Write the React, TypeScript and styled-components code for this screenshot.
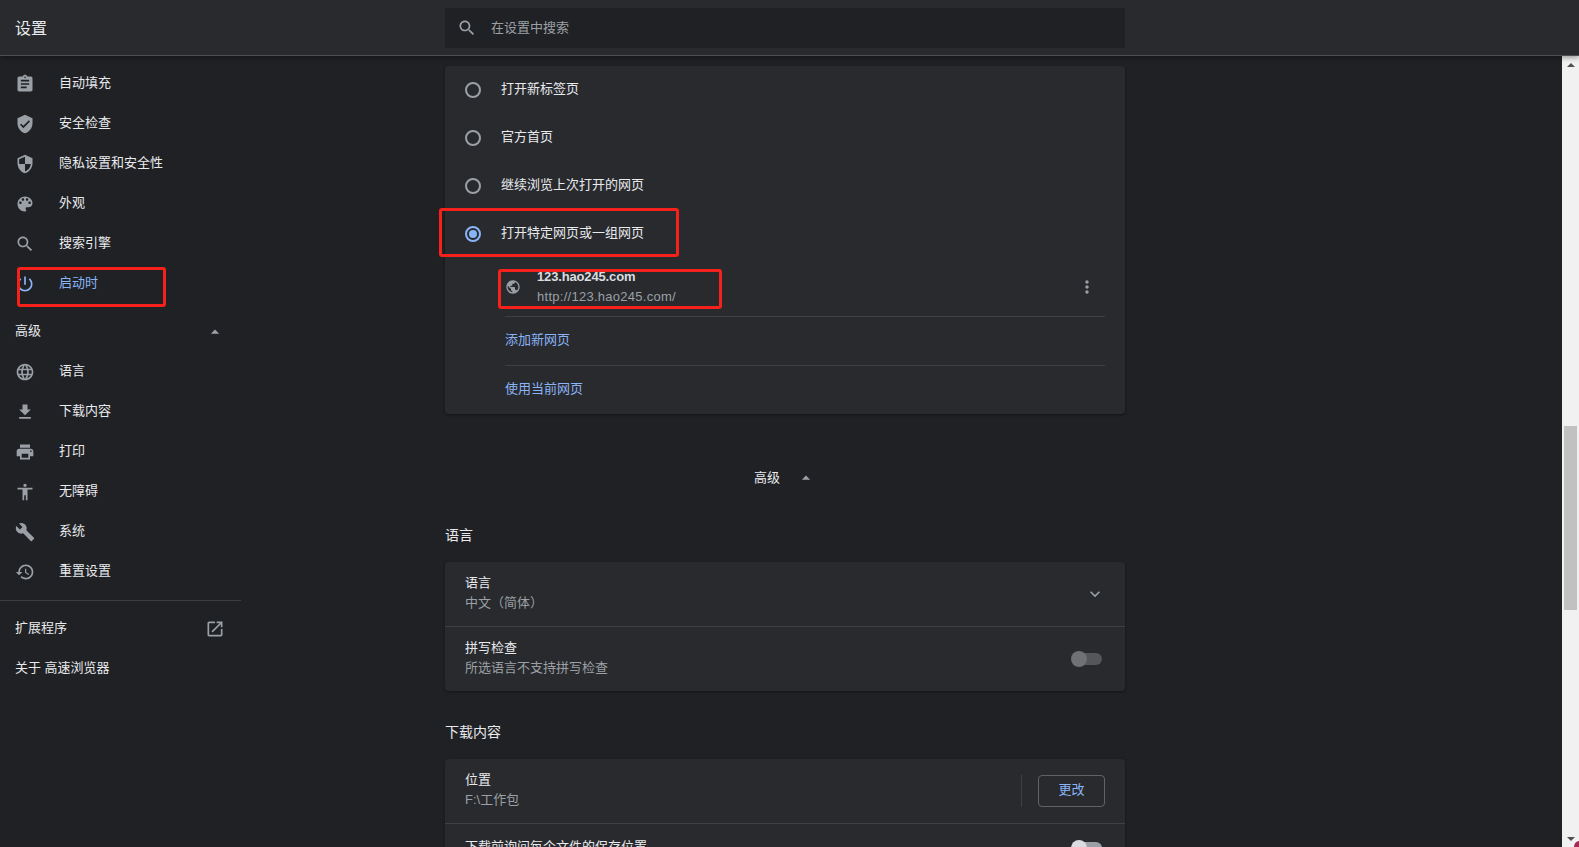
import React from "react";
import styled, { createGlobalStyle } from "styled-components";

const GlobalStyle = createGlobalStyle`
  html, body {
    margin: 0;
    height: 100%;
    overflow: hidden;
    background: #202124;
  }
  body {
    font-family: "Liberation Sans", "Noto Sans CJK SC", sans-serif;
    font-size: 13px;
    line-height: 20px;
    color: #e8eaed;
  }
`;

const paths = {
  assignment:
    "M19 3h-4.18C14.4 1.84 13.3 1 12 1c-1.3 0-2.4.84-2.82 2H5c-1.1 0-2 .9-2 2v14c0 1.1.9 2 2 2h14c1.1 0 2-.9 2-2V5c0-1.1-.9-2-2-2zm-7 0c.55 0 1 .45 1 1s-.45 1-1 1-1-.45-1-1 .45-1 1-1zm2 14H7v-2h7v2zm3-4H7v-2h10v2zm0-4H7V7h10v2z",
  verified:
    "M12 1L3 5v6c0 5.55 3.84 10.74 9 12 5.16-1.26 9-6.45 9-12V5l-9-4zm-2 16l-4-4 1.41-1.41L10 14.17l6.59-6.59L18 9l-8 8z",
  security:
    "M12 1L3 5v6c0 5.55 3.84 10.74 9 12 5.16-1.26 9-6.45 9-12V5l-9-4zm0 10.99h7c-.53 4.12-3.28 7.79-7 8.94V12H5V6.3l7-3.11v8.8z",
  palette:
    "M12 3c-4.97 0-9 4.03-9 9s4.03 9 9 9c.83 0 1.5-.67 1.5-1.5 0-.39-.15-.74-.39-1.01-.23-.26-.38-.61-.38-.99 0-.83.67-1.5 1.5-1.5H16c2.76 0 5-2.24 5-5 0-4.42-4.03-8-9-8zm-5.5 9c-.83 0-1.5-.67-1.5-1.5S5.67 9 6.5 9 8 9.67 8 10.5 7.33 12 6.5 12zm3-4C8.67 8 8 7.33 8 6.5S8.67 5 9.5 5s1.5.67 1.5 1.5S10.33 8 9.5 8zm5 0c-.83 0-1.5-.67-1.5-1.5S13.67 5 14.5 5s1.5.67 1.5 1.5S15.33 8 14.5 8zm3 4c-.83 0-1.5-.67-1.5-1.5S16.67 9 17.5 9s1.5.67 1.5 1.5-.67 1.5-1.5 1.5z",
  search:
    "M15.5 14h-.79l-.28-.27C15.41 12.59 16 11.11 16 9.5 16 5.91 13.09 3 9.5 3S3 5.91 3 9.5 5.91 16 9.5 16c1.61 0 3.09-.59 4.23-1.57l.27.28v.79l5 4.99L20.49 19l-4.99-5zm-6 0C7.01 14 5 11.99 5 9.5S7.01 5 9.5 5 14 7.01 14 9.5 11.99 14 9.5 14z",
  power:
    "M13 3h-2v10h2V3zm4.83 2.17l-1.42 1.42C17.99 7.86 19 9.81 19 12c0 3.87-3.13 7-7 7s-7-3.13-7-7c0-2.19 1.01-4.14 2.58-5.42L6.17 5.17C4.23 6.82 3 9.26 3 12c0 4.97 4.03 9 9 9s9-4.03 9-9c0-2.74-1.23-5.18-3.17-6.83z",
  language:
    "M11.99 2C6.47 2 2 6.48 2 12s4.47 10 9.99 10C17.52 22 22 17.52 22 12S17.52 2 11.99 2zm6.93 6h-2.95c-.32-1.25-.78-2.45-1.38-3.56 1.84.63 3.37 1.91 4.33 3.56zM12 4.04c.83 1.2 1.48 2.53 1.91 3.96h-3.82c.43-1.43 1.08-2.76 1.91-3.96zM4.26 14C4.1 13.36 4 12.69 4 12s.1-1.36.26-2h3.38c-.08.66-.14 1.32-.14 2 0 .68.06 1.34.14 2H4.26zm.82 2h2.95c.32 1.25.78 2.45 1.38 3.56-1.84-.63-3.37-1.9-4.33-3.56zm2.95-8H5.08c.96-1.66 2.49-2.93 4.33-3.56C8.81 5.55 8.35 6.75 8.03 8zM12 19.96c-.83-1.2-1.48-2.53-1.91-3.96h3.82c-.43 1.43-1.08 2.76-1.91 3.96zM14.34 14H9.66c-.09-.66-.16-1.32-.16-2 0-.68.07-1.35.16-2h4.68c.09.65.16 1.32.16 2 0 .68-.07 1.34-.16 2zm.25 5.56c.6-1.11 1.06-2.31 1.38-3.56h2.95c-.96 1.65-2.49 2.93-4.33 3.56zM16.36 14c.08-.66.14-1.32.14-2 0-.68-.06-1.34-.14-2h3.38c.16.64.26 1.31.26 2s-.1 1.36-.26 2h-3.38z",
  download: "M19 9h-4V3H9v6H5l7 7 7-7zM5 18v2h14v-2H5z",
  print:
    "M19 8H5c-1.66 0-3 1.34-3 3v6h4v4h12v-4h4v-6c0-1.66-1.34-3-3-3zm-3 11H8v-5h8v5zm3-7c-.55 0-1-.45-1-1s.45-1 1-1 1 .45 1 1-.45 1-1 1zm-1-9H6v4h12V3z",
  accessibility:
    "M12 2c1.1 0 2 .9 2 2s-.9 2-2 2-2-.9-2-2 .9-2 2-2zm9 7h-6v13h-2v-6h-2v6H9V9H3V7h18v2z",
  build:
    "M22.7 19l-9.1-9.1c.9-2.3.4-5-1.5-6.9-2-2-5-2.4-7.4-1.3L9 6 6 9 1.6 4.7C.4 7.1.9 10.1 2.9 12.1c1.9 1.9 4.6 2.4 6.9 1.5l9.1 9.1c.4.4 1 .4 1.4 0l2.3-2.3c.5-.4.5-1.1.1-1.4z",
  restore:
    "M13 3c-4.97 0-9 4.03-9 9H1l3.89 3.89.07.14L9 12H6c0-3.87 3.13-7 7-7s7 3.13 7 7-3.13 7-7 7c-1.93 0-3.68-.79-4.94-2.06l-1.42 1.42C8.27 19.99 10.51 21 13 21c4.97 0 9-4.03 9-9s-4.03-9-9-9zm-1 5v5l4.28 2.54.72-1.21-3.5-2.08V8H12z",
  openNew:
    "M19 19H5V5h7V3H5c-1.11 0-2 .9-2 2v14c0 1.1.89 2 2 2h14c1.1 0 2-.9 2-2v-7h-2v7zM14 3v2h3.59l-9.83 9.83 1.41 1.41L19 6.41V10h2V3h-7z",
  globe:
    "M12 2C6.48 2 2 6.48 2 12s4.48 10 10 10 10-4.48 10-10S17.52 2 12 2zm-1 17.93c-3.95-.49-7-3.85-7-7.93 0-.62.08-1.21.21-1.79L9 15v1c0 1.1.9 2 2 2v1.93zm6.9-2.54c-.26-.81-1-1.39-1.9-1.39h-1v-3c0-.55-.45-1-1-1H8v-2h2c.55 0 1-.45 1-1V7h2c1.1 0 2-.9 2-2v-.41c2.93 1.19 5 4.06 5 7.41 0 2.08-.8 3.97-2.1 5.39z",
  more:
    "M12 8c1.1 0 2-.9 2-2s-.9-2-2-2-2 .9-2 2 .9 2 2 2zm0 2c-1.1 0-2 .9-2 2s.9 2 2 2 2-.9 2-2-.9-2-2-2zm0 6c-1.1 0-2 .9-2 2s.9 2 2 2 2-.9 2-2-.9-2-2-2z",
  dropUp: "M7 14l5-5 5 5z",
  expand: "M16.59 8.59L12 13.17 7.41 8.59 6 10l6 6 6-6z",
};

const Svg = styled.svg<{ $size?: number; $active?: boolean }>`
  width: ${(p) => p.$size ?? 20}px;
  height: ${(p) => p.$size ?? 20}px;
  flex: none;
  fill: ${(p) => (p.$active ? "#8ab4f8" : "#9aa0a6")};
`;

const Icon = ({
  name,
  size,
  active,
}: {
  name: keyof typeof paths;
  size?: number;
  active?: boolean;
}) => (
  <Svg viewBox="0 0 24 24" $size={size} $active={active}>
    <path d={paths[name]} />
  </Svg>
);

const Page = styled.div`
  position: relative;
  display: flex;
  flex-direction: column;
  height: 100vh;
  overflow: hidden;
`;

const Header = styled.header`
  position: relative;
  z-index: 2;
  display: flex;
  align-items: center;
  flex: none;
  height: 55px;
  background: #292a2d;
  border-bottom: 1px solid #4c4d4f;
  box-shadow: 0 2px 5px rgba(0, 0, 0, 0.35);
`;

const Title = styled.h1`
  width: 430px;
  margin: 0;
  padding: 2px 0 0 15px;
  font-size: 16px;
  font-weight: 400;
`;

const SearchBox = styled.div`
  display: flex;
  align-items: center;
  gap: 14px;
  width: 680px;
  height: 40px;
  padding-left: 12px;
  box-sizing: border-box;
  background: #202124;
  border-radius: 2px;
  color: #9aa0a6;
`;

const Body = styled.div`
  display: flex;
  flex: 1;
  min-height: 0;
`;

const Sidebar = styled.nav`
  flex: none;
  width: 241px;
  padding-top: 8px;
`;

const NavRow = styled.div<{ $active?: boolean }>`
  display: flex;
  align-items: center;
  gap: 24px;
  height: 40px;
  padding-left: 15px;
  color: ${(p) => (p.$active ? "#8ab4f8" : "#e8eaed")};
`;

const NavPlain = styled.div<{ $top?: number }>`
  display: flex;
  align-items: center;
  justify-content: space-between;
  height: 40px;
  margin-top: ${(p) => p.$top ?? 0}px;
  padding: 0 16px 0 15px;
`;

// raises a label a little: the fallback CJK glyphs sit lower than the originals
const Label = styled.span`
  margin-bottom: 2px;
`;

const NavDivider = styled.div`
  height: 1px;
  margin: 8px 0;
  background: #3c3d40;
`;

const Main = styled.main`
  flex: 1;
  min-width: 0;
  padding: 10px 0 0 204px;
  overflow: hidden;
`;

const Column = styled.div`
  width: 680px;
`;

const Card = styled.section`
  background: #292a2d;
  border-radius: 4px;
  box-shadow: 0 1px 3px rgba(0, 0, 0, 0.4);
`;

const RadioRow = styled.div`
  display: flex;
  align-items: center;
  gap: 20px;
  height: 48px;
  padding-left: 20px;
`;

const Radio = styled.span<{ $checked?: boolean }>`
  display: flex;
  align-items: center;
  justify-content: center;
  flex: none;
  width: 16px;
  height: 16px;
  box-sizing: border-box;
  border: 2px solid ${(p) => (p.$checked ? "#8ab4f8" : "#9aa0a6")};
  border-radius: 50%;

  &::after {
    content: "";
    display: ${(p) => (p.$checked ? "block" : "none")};
    width: 8px;
    height: 8px;
    border-radius: 50%;
    background: #8ab4f8;
  }
`;

const UrlRow = styled.div`
  display: flex;
  align-items: center;
  gap: 16px;
  height: 58px;
  margin: 0 20px 0 60px;
  padding-right: 8px;
`;

const UrlText = styled.div`
  flex: 1;
`;

const UrlName = styled.div`
  font-weight: 700;
  letter-spacing: -0.15px;
  color: #dadce0;
`;

const UrlAddress = styled.div`
  letter-spacing: 0.27px;
  color: #9aa0a6;
`;

const LinkRow = styled.div`
  display: flex;
  align-items: center;
  height: 48px;
  margin: 0 20px 0 60px;
  border-top: 1px solid #3f4043;
  color: #8ab4f8;
`;

const AdvancedToggle = styled.div`
  display: flex;
  align-items: center;
  justify-content: center;
  gap: 16px;
  height: 48px;
  margin-top: 40px;
`;

const SectionHeading = styled.h2<{ $top: number }>`
  margin: ${(p) => p.$top}px 0 17px;
  font-size: 14px;
  font-weight: 400;
`;

const SettingRow = styled.div<{ $single?: boolean; $divided?: boolean }>`
  display: flex;
  align-items: center;
  justify-content: space-between;
  height: ${(p) => (p.$single ? 48 : 64)}px;
  padding: 0 20px;
  border-top: ${(p) => (p.$divided ? "1px solid #3f4043" : "0")};
`;

const SettingText = styled.div`
  margin-bottom: 2px;
`;

const SettingSub = styled.div`
  color: #9aa0a6;
`;

const Toggle = styled.span<{ $on?: boolean }>`
  position: relative;
  display: block;
  flex: none;
  width: 29px;
  height: 12px;
  margin: 0 3px 0 0;
  border-radius: 6px;
  background: ${(p) => (p.$on ? "#9aa0a6" : "#54565a")};

  &::before {
    content: "";
    position: absolute;
    top: -2px;
    left: -2px;
    width: 16px;
    height: 16px;
    border-radius: 50%;
    background: ${(p) => (p.$on ? "#dadce0" : "#6f7175")};
  }
`;

const RowAction = styled.div`
  display: flex;
  align-items: center;
  gap: 16px;
`;

const VerticalRule = styled.span`
  width: 1px;
  height: 32px;
  background: #3f4043;
`;

const OutlineButton = styled.button`
  width: 67px;
  height: 32px;
  padding: 0 0 3px;
  background: transparent;
  border: 1px solid #5f6368;
  border-radius: 4px;
  color: #8ab4f8;
  font: inherit;
`;

const Scrollbar = styled.div`
  display: flex;
  flex-direction: column;
  align-items: center;
  flex: none;
  width: 17px;
  background: #f1f1f1;
`;

const ScrollArrow = styled.span<{ $down?: boolean }>`
  flex: none;
  margin: ${(p) => (p.$down ? "auto 0 6px" : "7px 0 0")};
  border-left: 4px solid transparent;
  border-right: 4px solid transparent;
  border-bottom: ${(p) => (p.$down ? "0" : "4px solid #505050")};
  border-top: ${(p) => (p.$down ? "4px solid #505050" : "0")};
`;

const ScrollThumb = styled.div`
  flex: none;
  width: 13px;
  height: 184px;
  margin-top: 359px;
  background: #c1c1c1;
`;

// the red boxes someone drew on top of the screenshot
const Callout = styled.div<{ $x: number; $y: number; $w: number; $h: number }>`
  position: absolute;
  z-index: 3;
  left: ${(p) => p.$x}px;
  top: ${(p) => p.$y}px;
  width: ${(p) => p.$w}px;
  height: ${(p) => p.$h}px;
  box-sizing: border-box;
  border: 3px solid #f5211a;
  border-radius: 3px;
  pointer-events: none;
`;

// sliver of a floating widget peeking in at the window corner
const CornerSliver = styled.div`
  position: absolute;
  z-index: 3;
  right: 0;
  bottom: 0;
  width: 5px;
  height: 6px;
  background: #a32b55;
  border-top-left-radius: 100%;
`;

const topNav: [keyof typeof paths, string][] = [
  ["assignment", "自动填充"],
  ["verified", "安全检查"],
  ["security", "隐私设置和安全性"],
  ["palette", "外观"],
  ["search", "搜索引擎"],
];

const advancedNav: [keyof typeof paths, string][] = [
  ["language", "语言"],
  ["download", "下载内容"],
  ["print", "打印"],
  ["accessibility", "无障碍"],
  ["build", "系统"],
  ["restore", "重置设置"],
];

const startupOptions = ["打开新标签页", "官方首页", "继续浏览上次打开的网页"];

export default function App() {
  return (
    <Page>
      <GlobalStyle />
      <Header>
        <Title>设置</Title>
        <SearchBox>
          <Icon name="search" />
          在设置中搜索
        </SearchBox>
      </Header>
      <Body>
        <Sidebar>
          {topNav.map(([icon, label]) => (
            <NavRow key={label}>
              <Icon name={icon} />
              <Label>{label}</Label>
            </NavRow>
          ))}
          <NavRow $active>
            <Icon name="power" active />
            <Label>启动时</Label>
          </NavRow>
          <NavPlain $top={8}>
            <Label>高级</Label>
            <Icon name="dropUp" />
          </NavPlain>
          {advancedNav.map(([icon, label]) => (
            <NavRow key={label}>
              <Icon name={icon} />
              <Label>{label}</Label>
            </NavRow>
          ))}
          <NavDivider />
          <NavPlain>
            <Label>扩展程序</Label>
            <Icon name="openNew" />
          </NavPlain>
          <NavPlain>
            <Label>关于 高速浏览器</Label>
          </NavPlain>
        </Sidebar>
        <Main>
          <Column>
            <Card>
              {startupOptions.map((label) => (
                <RadioRow key={label}>
                  <Radio />
                  <Label>{label}</Label>
                </RadioRow>
              ))}
              <RadioRow>
                <Radio $checked />
                <Label>打开特定网页或一组网页</Label>
              </RadioRow>
              <UrlRow>
                <Icon name="globe" size={16} />
                <UrlText>
                  <UrlName>123.hao245.com</UrlName>
                  <UrlAddress>http://123.hao245.com/</UrlAddress>
                </UrlText>
                <Icon name="more" />
              </UrlRow>
              <LinkRow>
                <Label>添加新网页</Label>
              </LinkRow>
              <LinkRow>
                <Label>使用当前网页</Label>
              </LinkRow>
            </Card>
            <AdvancedToggle>
              高级
              <Icon name="dropUp" />
            </AdvancedToggle>
            <SectionHeading $top={23}>语言</SectionHeading>
            <Card>
              <SettingRow>
                <SettingText>
                  <div>语言</div>
                  <SettingSub>中文（简体）</SettingSub>
                </SettingText>
                <Icon name="expand" />
              </SettingRow>
              <SettingRow $divided>
                <SettingText>
                  <div>拼写检查</div>
                  <SettingSub>所选语言不支持拼写检查</SettingSub>
                </SettingText>
                <Toggle />
              </SettingRow>
            </Card>
            <SectionHeading $top={31}>下载内容</SectionHeading>
            <Card>
              <SettingRow>
                <SettingText>
                  <div>位置</div>
                  <SettingSub>F:\工作包</SettingSub>
                </SettingText>
                <RowAction>
                  <VerticalRule />
                  <OutlineButton>更改</OutlineButton>
                </RowAction>
              </SettingRow>
              <SettingRow $divided $single>
                <SettingText>下载前询问每个文件的保存位置</SettingText>
                <Toggle $on />
              </SettingRow>
            </Card>
          </Column>
        </Main>
        <Scrollbar>
          <ScrollArrow />
          <ScrollThumb />
          <ScrollArrow $down />
        </Scrollbar>
      </Body>
      <Callout $x={17} $y={267} $w={149} $h={40} />
      <Callout $x={439} $y={208} $w={240} $h={49} />
      <Callout $x={498} $y={269} $w={224} $h={40} />
      <CornerSliver />
    </Page>
  );
}
